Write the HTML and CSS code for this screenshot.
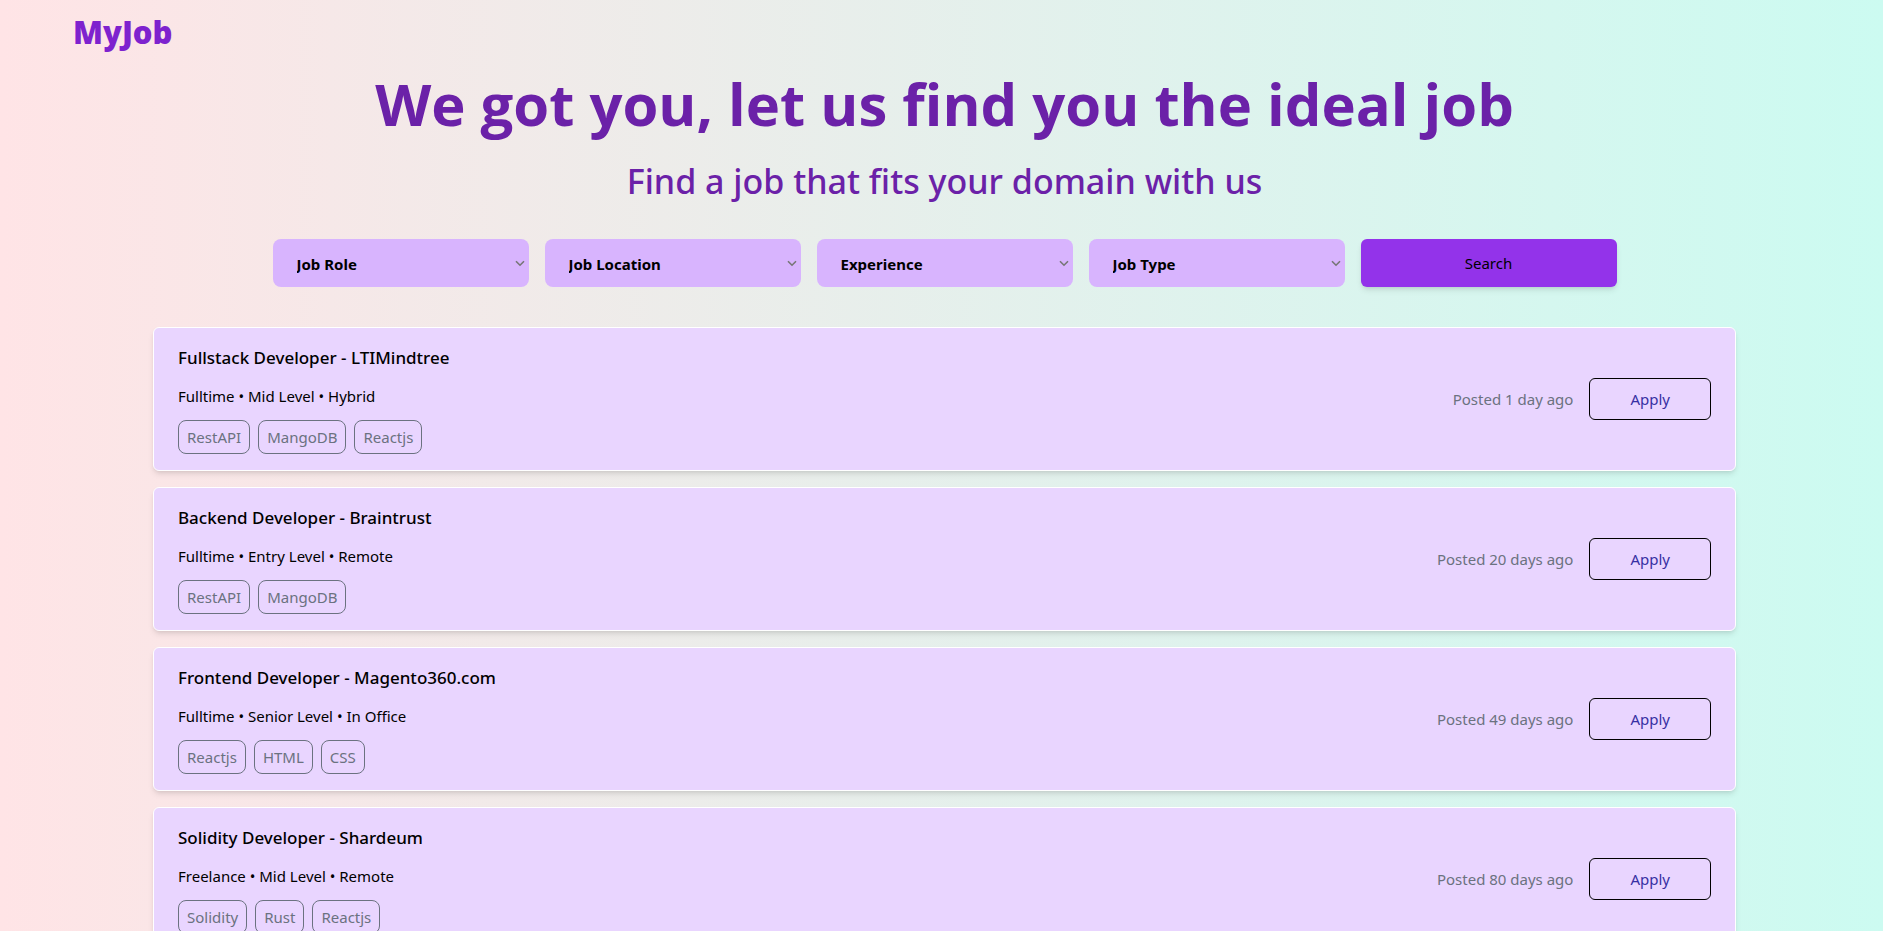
FILE: index.html
```html
<!DOCTYPE html>
<html lang="en">
<head>
<meta charset="utf-8">
<meta name="viewport" content="width=device-width, initial-scale=1">
<title>MyJob</title>
<link rel="stylesheet" href="styles.css">
</head>
<body>
<header class="navbar"><a class="logo" href="#">MyJob</a></header>
<main class="main">
  <h1 class="headline">We got you, let us find you the ideal job</h1>
  <h2 class="subhead">Find a job that fits your domain with us</h2>
  <form class="search">
    <div class="field">
      <select class="select" aria-label="Job Role"><option>Job Role</option></select>
      <svg class="chevron" viewBox="0 0 10 7" aria-hidden="true"><path d="M1 1.2 5 5.2 9 1.2"/></svg>
    </div>
    <div class="field">
      <select class="select" aria-label="Job Location"><option>Job Location</option></select>
      <svg class="chevron" viewBox="0 0 10 7" aria-hidden="true"><path d="M1 1.2 5 5.2 9 1.2"/></svg>
    </div>
    <div class="field">
      <select class="select" aria-label="Experience"><option>Experience</option></select>
      <svg class="chevron" viewBox="0 0 10 7" aria-hidden="true"><path d="M1 1.2 5 5.2 9 1.2"/></svg>
    </div>
    <div class="field">
      <select class="select" aria-label="Job Type"><option>Job Type</option></select>
      <svg class="chevron" viewBox="0 0 10 7" aria-hidden="true"><path d="M1 1.2 5 5.2 9 1.2"/></svg>
    </div>
    <button class="search-button" type="button">Search</button>
  </form>
  <section class="jobs">
    <article class="card">
      <div class="info">
        <h3 class="title">Fullstack Developer - LTIMindtree</h3>
        <p class="meta">Fulltime • Mid Level • Hybrid</p>
        <ul class="skills"><li class="skill">RestAPI</li><li class="skill">MangoDB</li><li class="skill">Reactjs</li></ul>
      </div>
      <div class="actions"><p class="posted">Posted 1 day ago</p><a class="apply" href="#">Apply</a></div>
    </article>
    <article class="card">
      <div class="info">
        <h3 class="title">Backend Developer - Braintrust</h3>
        <p class="meta">Fulltime • Entry Level • Remote</p>
        <ul class="skills"><li class="skill">RestAPI</li><li class="skill">MangoDB</li></ul>
      </div>
      <div class="actions"><p class="posted">Posted 20 days ago</p><a class="apply" href="#">Apply</a></div>
    </article>
    <article class="card">
      <div class="info">
        <h3 class="title">Frontend Developer - Magento360.com</h3>
        <p class="meta">Fulltime • Senior Level • In Office</p>
        <ul class="skills"><li class="skill">Reactjs</li><li class="skill">HTML</li><li class="skill">CSS</li></ul>
      </div>
      <div class="actions"><p class="posted">Posted 49 days ago</p><a class="apply" href="#">Apply</a></div>
    </article>
    <article class="card">
      <div class="info">
        <h3 class="title">Solidity Developer - Shardeum</h3>
        <p class="meta">Freelance • Mid Level • Remote</p>
        <ul class="skills"><li class="skill">Solidity</li><li class="skill">Rust</li><li class="skill">Reactjs</li></ul>
      </div>
      <div class="actions"><p class="posted">Posted 80 days ago</p><a class="apply" href="#">Apply</a></div>
    </article>
  </section>
</main>
</body>
</html>
```
FILE: styles.css
```css
*, *::before, *::after { box-sizing: border-box; }
h1, h2, h3, p, ul { margin: 0; padding: 0; }
body {
  margin: 0;
  min-height: 100vh;
  background: linear-gradient(to right, #ffe4e6, #ccfbf1);
  color: #000;
  font-family: "Noto Sans", "Open Sans", sans-serif;
  font-size: 15px;
  line-height: 24px;
  font-weight: 400;
}
.navbar { display: flex; padding: 14px 73px; }
.logo {
  color: #7e22ce;
  font-size: 31px;
  line-height: 36px;
  font-weight: 900;
  text-decoration: none;
}
.main { padding: 10px 147px 16px 153px; }
.headline {
  color: #6b21a8;
  font-family: "Open Sans", "Noto Sans", sans-serif;
  font-size: 58px;
  line-height: 60px;
  font-weight: 700;
  text-align: center;
}
.subhead {
  margin-top: 27px;
  color: #6b21a8;
  font-size: 34px;
  line-height: 40px;
  font-weight: 500;
  text-align: center;
}
.search {
  display: flex;
  justify-content: center;
  gap: 16px;
  margin-top: 38px;
}
.field { position: relative; flex: 0 1 256px; }
.select {
  appearance: none;
  display: block;
  width: 100%;
  height: 48px;
  padding: 1px 24px 0;
  border: 0;
  border-radius: 8px;
  background: #d8b4fe;
  color: #000;
  font: inherit;
  font-weight: 700;
}
.chevron {
  position: absolute;
  top: 21px;
  right: 4px;
  width: 10px;
  height: 7px;
  fill: none;
  stroke: #767676;
  stroke-width: 1.6;
  pointer-events: none;
}
.search-button {
  flex: 0 1 256px;
  height: 48px;
  border: 0;
  border-radius: 6px;
  background: #9333ea;
  color: #000;
  font: inherit;
  box-shadow: 0 4px 6px -1px rgb(0 0 0 / 0.1), 0 2px 4px -2px rgb(0 0 0 / 0.1);
}
.jobs { display: grid; gap: 16px; margin-top: 40px; }
.card {
  display: flex;
  justify-content: space-between;
  align-items: center;
  padding: 16px 24px;
  border: 1px solid #fff;
  border-radius: 6px;
  background: #e9d5ff;
  box-shadow: 0 4px 6px -1px rgb(0 0 0 / 0.1), 0 2px 4px -2px rgb(0 0 0 / 0.1);
}
.info { display: grid; gap: 12px; }
.title { font-size: 17px; line-height: 28px; font-weight: 500; }
.skills { display: flex; gap: 8px; list-style: none; }
.skill {
  padding: 4px 8px;
  border: 1px solid #6b7280;
  border-radius: 8px;
  color: #6b7280;
}
.actions { display: flex; align-items: center; gap: 16px; }
.posted { color: #6b7280; }
.apply {
  padding: 8px 40px;
  border: 1px solid #000;
  border-radius: 6px;
  color: #3730a3;
  text-decoration: none;
}
```
